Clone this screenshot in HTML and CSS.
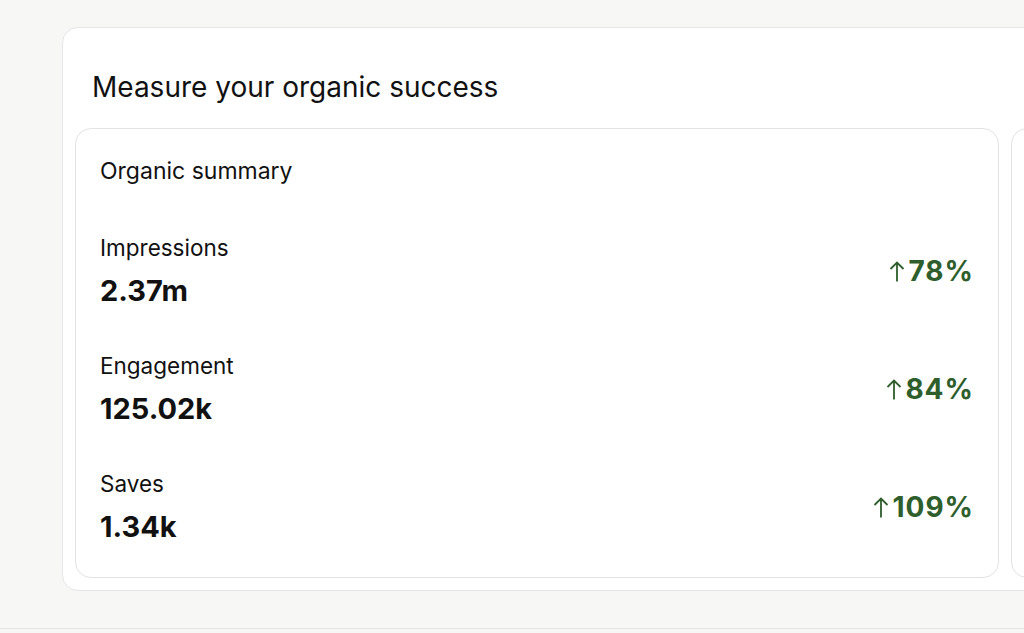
FILE: index.html
```html
<!DOCTYPE html>
<html lang="en">
<head>
<meta charset="utf-8">
<title>Measure your organic success</title>
<link rel="stylesheet" href="styles.css">
</head>
<body>
<div class="page">
  <section class="panel">
    <h1 class="panel-title">Measure your organic success</h1>
    <div class="cards">
      <div class="card">
        <h2 class="card-title">Organic summary</h2>
        <div class="rows">
          <div class="row">
            <div class="metric">
              <div class="metric-label">Impressions</div>
              <div class="metric-value">2.37m</div>
            </div>
            <div class="change"><svg class="arrow" viewBox="0 0 16 22" aria-hidden="true"><path d="M8 21V2M1.5 8.5L8 2l6.5 6.5" fill="none" stroke="currentColor" stroke-width="1.8"/></svg>78%</div>
          </div>
          <div class="row">
            <div class="metric">
              <div class="metric-label">Engagement</div>
              <div class="metric-value">125.02k</div>
            </div>
            <div class="change"><svg class="arrow" viewBox="0 0 16 22" aria-hidden="true"><path d="M8 21V2M1.5 8.5L8 2l6.5 6.5" fill="none" stroke="currentColor" stroke-width="1.8"/></svg>84%</div>
          </div>
          <div class="row">
            <div class="metric">
              <div class="metric-label">Saves</div>
              <div class="metric-value">1.34k</div>
            </div>
            <div class="change"><svg class="arrow" viewBox="0 0 16 22" aria-hidden="true"><path d="M8 21V2M1.5 8.5L8 2l6.5 6.5" fill="none" stroke="currentColor" stroke-width="1.8"/></svg>109%</div>
          </div>
        </div>
      </div>
      <div class="card card-next"></div>
    </div>
  </section>
</div>
</body>
</html>
```
FILE: styles.css
```css
html, body {
  margin: 0;
  padding: 0;
  overflow: hidden;
}
body {
  background: #f7f8f6;
  font-family: Inter, "Liberation Sans", sans-serif;
  color: #111;
  width: 1024px;
  height: 633px;
}
.page {
  height: 629px;
  box-sizing: border-box;
  border-bottom: 1px solid #e4e5e3;
  padding: 27px 0 0 62px;
  overflow: hidden;
}
.panel {
  width: 1100px;
  box-sizing: border-box;
  background: #fff;
  border: 1px solid #e6e6e6;
  border-radius: 16px;
  padding: 42px 0 12px 12px;
}
.panel-title {
  margin: 0 0 24px 17px;
  font-size: 28px;
  line-height: 34px;
  font-weight: 400;
  color: #111;
}
.cards {
  display: flex;
  gap: 12px;
}
.card {
  flex: none;
  width: 924px;
  height: 450px;
  box-sizing: border-box;
  border: 1px solid #e3e3e3;
  border-radius: 16px;
  padding: 28px 24px 0 24px;
}
.card-next {
  width: 200px;
}
.card-title {
  margin: 0 0 49px;
  font-size: 23px;
  line-height: 28px;
  font-weight: 400;
}
.rows {
  display: flex;
  flex-direction: column;
  gap: 44px;
}
.row {
  display: flex;
  justify-content: space-between;
  align-items: center;
}
.metric {
  display: flex;
  flex-direction: column;
  gap: 12px;
}
.metric-label {
  font-size: 22.5px;
  line-height: 28px;
}
.metric-value {
  font-size: 29px;
  line-height: 34px;
  font-weight: 700;
}
.change {
  display: flex;
  align-items: center;
  gap: 3px;
  color: #2e5e2b;
  font-size: 28px;
  line-height: 32px;
  font-weight: 700;
  letter-spacing: 1px;
}
.arrow {
  width: 16px;
  height: 23px;
}
```
